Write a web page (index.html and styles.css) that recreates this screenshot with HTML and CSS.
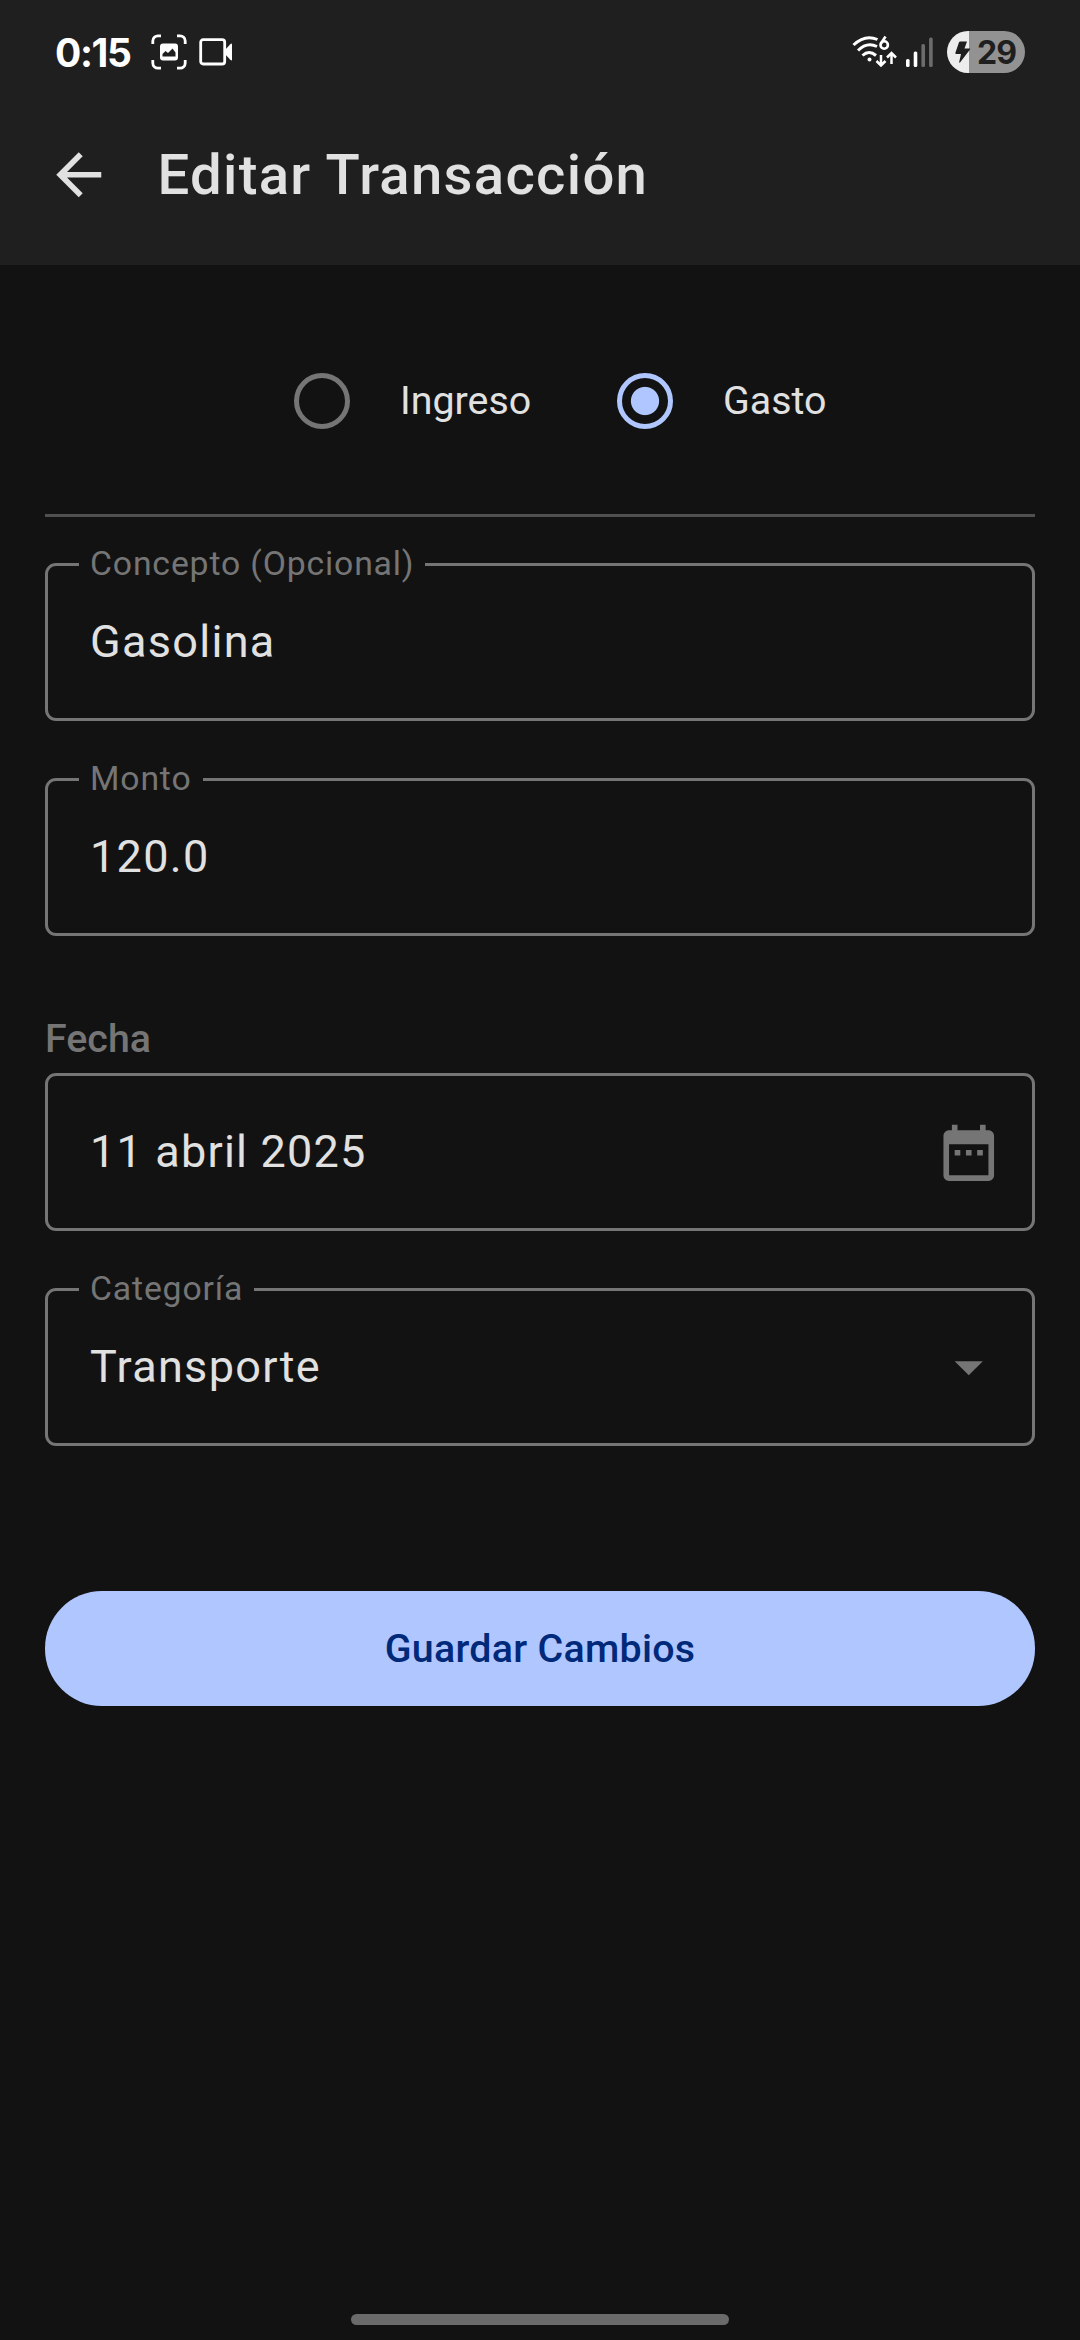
FILE: index.html
```html
<!DOCTYPE html>
<html lang="es">
<head>
<meta charset="utf-8">
<title>Editar Transacción</title>
<link rel="stylesheet" href="styles.css">
</head>
<body>
<div class="screen">
  <header class="header">
    <div class="status">
      <span class="clock">0:15</span>
      <svg class="capture" width="36" height="36" viewBox="0 0 36 36">
        <path d="M1.800 10V7a5.200 5.200 0 0 1 5.200-5.200H10M26 1.800h3a5.200 5.200 0 0 1 5.200 5.200v3M34.200 26v3a5.200 5.200 0 0 1-5.200 5.200h-3M10 34.200H7A5.200 5.200 0 0 1 1.800 29v-3" fill="none" stroke="#fff" stroke-width="2.800"/>
        <rect x="9" y="9.500" width="18" height="17" rx="3" fill="#fff"/>
        <path d="M11.500 22.500v-2.500l3-3 2.500 2 4.500-4.500 3 4v4z" fill="#1f1f1f"/>
      </svg>
      <svg class="video" width="34" height="28" viewBox="0 0 34 28">
        <rect x="1.700" y="1.700" width="24" height="24.300" rx="2.500" fill="none" stroke="#fff" stroke-width="2.800"/>
        <path d="M26 12l5.500-6q1.500-1 1.500.5v15q0 1.500-1.500.5l-5.500-6z" fill="#fff"/>
      </svg>
      <span class="spacer"></span>
      <svg class="wifi" width="46" height="34" viewBox="0 0 46 34">
        <g fill="none" stroke="#fff" stroke-width="3">
          <path d="M1.500 10Q13 -1 25.500 4.500"/>
          <path d="M6 15.500Q15 6.500 25 11.500"/>
          <path d="M10.500 20.500Q17 14.500 24 20.500"/>
          <path d="M29 20v10M24.500 26l4.500 4.500 4.500-4.500M39.500 29V19M35 22.500l4.500-4.500 4.500 4.500" stroke-width="2.500"/>
          <circle cx="32.200" cy="10" r="3.700" stroke-width="2.600"/>
          <path d="M28.700 9L33.500 1.500" stroke-width="2.600"/>
        </g>
        <circle cx="17.500" cy="24.500" r="2" fill="#fff"/>
      </svg>
      <svg class="signal" width="27" height="30" viewBox="0 0 27 30">
        <rect x="0" y="22" width="3.600" height="8" rx="1.500" fill="#fff"/>
        <rect x="7.700" y="14.500" width="3.600" height="15.500" rx="1.500" fill="#fff"/>
        <rect x="15.400" y="7" width="3.600" height="23" rx="1.500" fill="#6c6c6c"/>
        <rect x="23.100" y="0.500" width="3.600" height="29.500" rx="1.500" fill="#6c6c6c"/>
      </svg>
      <span class="battery">
        <svg width="16" height="22" viewBox="0 0 16 22"><path d="M5 .5h7L9.500 7.500h5.200q.8.200.3 1L5 21.500q-.8.500-.8-.5L6 13H1q-1-.2-.6-1.200L4 1.200Q4.300.500 5 .5z" fill="#1f1f1f"/></svg>
        <span class="level">29</span>
      </span>
    </div>
    <div class="appbar">
      <svg class="icon" viewBox="0 0 24 24"><path fill="#e1e1e1" d="M20 11H7.830l5.590-5.590L12 4l-8 8 8 8 1.410-1.410L7.830 13H20v-2z"/></svg>
      <h1 class="title">Editar Transacción</h1>
    </div>
  </header>
  <main class="form">
    <div class="radios">
      <label class="option"><span class="radio"></span><span>Ingreso</span></label>
      <label class="option"><span class="radio checked"></span><span>Gasto</span></label>
    </div>
    <fieldset class="field concept">
      <legend class="legend">Concepto (Opcional)</legend>
      <span class="value">Gasolina</span>
    </fieldset>
    <fieldset class="field amount">
      <legend class="legend">Monto</legend>
      <span class="value">120.0</span>
    </fieldset>
    <div class="caption">Fecha</div>
    <div class="field date">
      <span class="value">11 abril 2025</span>
      <svg class="icon" viewBox="0 0 24 24"><path fill="#757575" d="M9 11H7v2h2v-2zm4 0h-2v2h2v-2zm4 0h-2v2h2v-2zm2-7h-1V2h-2v2H8V2H6v2H5c-1.110 0-1.990.9-1.990 2L3 20c0 1.100.89 2 2 2h14c1.100 0 2-.9 2-2V6c0-1.100-.9-2-2-2zm0 16H5V9h14v11z"/></svg>
    </div>
    <fieldset class="field category">
      <legend class="legend">Categoría</legend>
      <span class="value">Transporte</span>
      <svg class="icon" viewBox="0 0 24 24"><path fill="#757575" d="M7 10l5 5 5-5z"/></svg>
    </fieldset>
    <button class="save">Guardar Cambios</button>
  </main>
  <div class="handle"></div>
</div>
</body>
</html>
```
FILE: styles.css
```css
* { box-sizing: border-box; }
body {
  margin: 0;
  background: #121212;
  color: #e1e1e1;
  font-family: Roboto, sans-serif;
}
.screen {
  width: 1080px;
  height: 2340px;
  display: flex;
  flex-direction: column;
  align-items: center;
}
.header {
  width: 1080px;
  height: 265px;
  background: #1f1f1f;
}
.status {
  height: 104px;
  padding: 0 55px;
  display: flex;
  align-items: center;
  color: #fff;
  font-family: Inter, sans-serif;
}
.clock {
  width: 96px;
  font-size: 39px;
  font-weight: 700;
  letter-spacing: -1.4px;
}
.video { margin-left: 12px; }
.spacer { flex: 1; }
.wifi { margin-right: 8px; }
.signal { margin: 0 14px 0 0; }
.battery {
  width: 78px;
  height: 42px;
  border-radius: 21px;
  padding-left: 8px;
  display: flex;
  align-items: center;
  gap: 6px;
  background: linear-gradient(90deg, #ededed 22px, #929292 22px);
  color: #1f1f1f;
}
.level {
  font-size: 32px;
  font-weight: 700;
  letter-spacing: -1px;
}
.appbar {
  height: 142px;
  padding-left: 45px;
  display: flex;
  align-items: center;
  gap: 45px;
}
.icon {
  width: 67.5px;
  height: 67.5px;
  flex: none;
}
.title {
  margin: 0;
  font-size: 56.25px;
  font-weight: 500;
  letter-spacing: 1.3px;
}
.form {
  width: 990px;
  flex: 1;
}
.radios {
  height: 252px;
  padding: 22px 0 0 249px;
  border-bottom: 3px solid #505050;
  display: flex;
  align-items: center;
  font-size: 39.375px;
}
.option {
  width: 323px;
  display: flex;
  align-items: center;
  gap: 50px;
}
.radio {
  width: 56px;
  height: 56px;
  border: 5.6px solid #757575;
  border-radius: 50%;
}
.checked {
  border-color: #b0c6ff;
  background: radial-gradient(circle, #b0c6ff 13.6px, transparent 14.6px);
}
.field {
  width: 990px;
  height: 158px;
  margin: 0;
  padding: 0 30px 0 42px;
  border: 3px solid #757575;
  border-radius: 11px;
  display: flex;
  align-items: center;
  justify-content: space-between;
}
.concept { margin-top: 46px; }
.amount { margin-top: 57px; }
.category { margin-top: 57px; }
.legend {
  height: 3px;
  margin-left: -11px;
  padding: 0 11px;
  line-height: 1px;
  font-size: 33.75px;
  letter-spacing: 0.84px;
  color: #757575;
}
.value {
  font-size: 45px;
  line-height: 54px;
  letter-spacing: 1.3px;
}
.date .value { letter-spacing: 1.2px; }
.date .icon { margin-top: 1px; }
.caption {
  margin-top: 80px;
  height: 57px;
  line-height: 46px;
  font-size: 39.375px;
  font-weight: 500;
  color: #757575;
}
.save {
  width: 990px;
  height: 115px;
  margin-top: 145px;
  padding: 0;
  display: block;
  border: 0;
  border-radius: 57px;
  background: #b0c6ff;
  color: #002979;
  font-family: inherit;
  font-size: 39.375px;
  font-weight: 500;
  letter-spacing: 0.28px;
}
.handle {
  width: 378px;
  height: 11px;
  margin-bottom: 15px;
  border-radius: 6px;
  background: #6a6a6a;
}
```
